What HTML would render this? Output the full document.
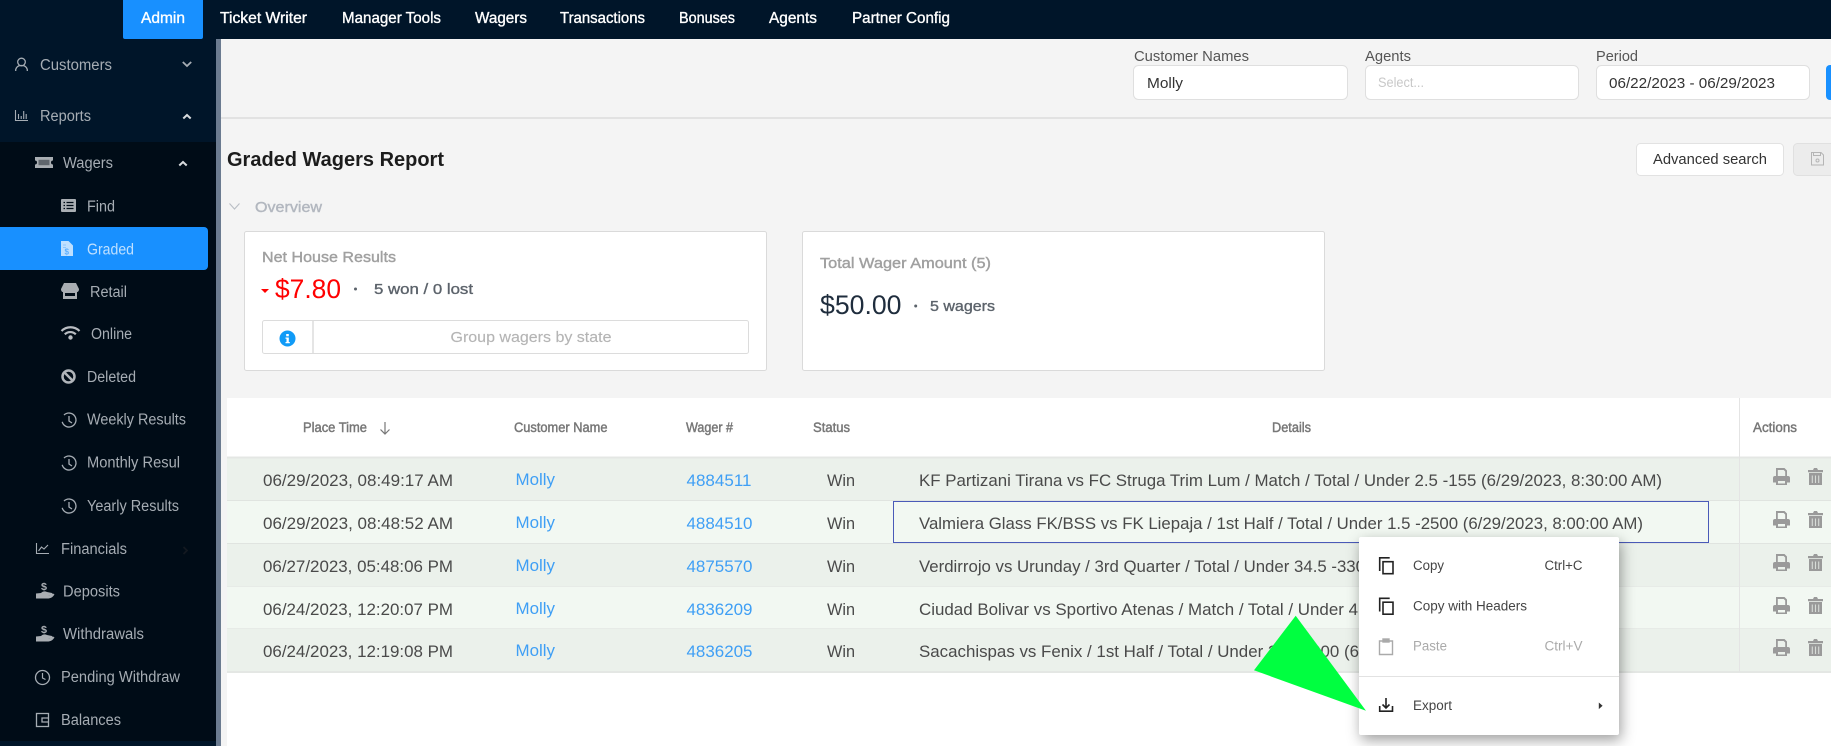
<!DOCTYPE html>
<html lang="en">
<head>
<meta charset="utf-8">
<title>Graded Wagers Report</title>
<style>
html,body{margin:0;padding:0;width:1831px;height:746px;overflow:hidden;background:#f4f4f4}
svg{display:block}
text{font-family:"Liberation Sans",Arial,sans-serif;font-size:14px;white-space:pre}
.nav{fill:#fff;font-size:15.5px;stroke:#fff;stroke-width:.35}
.side{fill:#a6adb4;font-size:15.5px}
.lab{fill:#555;font-size:14.5px}
.inp{fill:#333;font-size:15px}
.cell{fill:#4a4a4a;font-size:16.5px}
.link{fill:#3f9ff5;font-size:16.5px}
.hd{fill:#777;font-size:13.5px;stroke:#777;stroke-width:.45}
.ttl{fill:#a0a0a0;font-size:15px;stroke:#a0a0a0;stroke-width:.4}
.sub{fill:#5c636b;font-size:14.5px;stroke:#5c636b;stroke-width:.35}
.mi{fill:#444;font-size:13.5px}
.dis{fill:#aaa;font-size:13.5px}
.ln{fill:none;stroke:#a6adb4;stroke-width:1.3}
.g{fill:#a9aeb3}
</style>
</head>
<body>
<svg xmlns="http://www.w3.org/2000/svg" width="1831" height="746" viewBox="0 0 1831 746">
<defs>
<g id="print"><path fill="#9a9a9a" fill-rule="evenodd" d="M3 8V0h8.500L14 2.500V8h1a2 2 0 0 1 2 2v4.500h-3V17H3v-2.500H0V10a2 2 0 0 1 2-2zM4.800 2v6h7.400V3.500L10.700 2zM5 13v2.500h7V13z"/></g>
<g id="trash"><path fill="#9a9a9a" d="M0 2h5l1-2h3l1 2h5v2.200H0zM1 5h13v12H1z"/><path d="M4.300 7.500v7.500M7.500 7.500v7.500M10.700 7.500v7.500" stroke="#d8dcd8" stroke-width="1.100"/></g>
<g id="copy" fill="none" stroke="#222" stroke-width="1.600"><path d="M1379.700 571V557.800h10"/><rect x="1383" y="561.700" width="10" height="12"/></g>
<g id="clock" class="ln"><path d="M64 415.100a7 7 0 1 1-1.800 6.700"/><path d="M69 416v5l3 2"/></g>
<g id="hand" class="g"><path d="M41 593c2-2 4-2 6-1l5 1c1 1 0 2-1 2l-3 .5c2 0 4-1 5-2l1.500 1c-2 3-4 4-7 4H36v-5z"/><text x="41" y="590" style="font-size:10px;font-weight:bold;fill:#a9aeb3" textLength="6" lengthAdjust="spacingAndGlyphs">$</text></g>
</defs>

<!-- page -->
<rect width="1831" height="746" fill="#f4f4f4"/>

<!-- top bar -->
<rect width="1831" height="39" fill="#001529"/>
<path d="M123 0h80v37a2 2 0 0 1-2 2h-76a2 2 0 0 1-2-2z" fill="#1890ff"/>
<text class="nav" x="141" y="23" textLength="44" lengthAdjust="spacingAndGlyphs">Admin</text>
<text class="nav" x="220" y="23" textLength="87" lengthAdjust="spacingAndGlyphs">Ticket Writer</text>
<text class="nav" x="342" y="23" textLength="99" lengthAdjust="spacingAndGlyphs">Manager Tools</text>
<text class="nav" x="475" y="23" textLength="52" lengthAdjust="spacingAndGlyphs">Wagers</text>
<text class="nav" x="560" y="23" textLength="85" lengthAdjust="spacingAndGlyphs">Transactions</text>
<text class="nav" x="679" y="23" textLength="56" lengthAdjust="spacingAndGlyphs">Bonuses</text>
<text class="nav" x="769" y="23" textLength="48" lengthAdjust="spacingAndGlyphs">Agents</text>
<text class="nav" x="852" y="23" textLength="98" lengthAdjust="spacingAndGlyphs">Partner Config</text>

<!-- sidebar -->
<rect x="0" y="39" width="216" height="103" fill="#001529"/>
<rect x="0" y="142" width="216" height="599" fill="#000c17"/>
<rect x="0" y="741" width="216" height="5" fill="#001529"/>
<rect x="216" y="39" width="5" height="707" fill="#6b7b90"/>
<path d="M0 227h204a4 4 0 0 1 4 4v35a4 4 0 0 1-4 4H0z" fill="#1890ff"/>

<!-- customers -->
<g class="ln"><circle cx="21.500" cy="62" r="3.800"/><path d="M15.700 71v-1.500a5 5 0 0 1 5-4h1.600a5 5 0 0 1 5 4V71"/></g>
<text class="side" x="40" y="70" textLength="72" lengthAdjust="spacingAndGlyphs">Customers</text>
<path d="M182.800 62l4.200 4 4.200-4" fill="none" stroke="#a6adb4" stroke-width="1.800"/>
<!-- reports -->
<g fill="none" stroke="#a6adb4" stroke-width="1.100"><path d="M15.500 110v10.500H28"/><path d="M18.500 119v-5M21.200 119v-3M23.700 119v-8M26.200 119v-5"/></g>
<text class="side" x="40" y="121" textLength="51" lengthAdjust="spacingAndGlyphs">Reports</text>
<path d="M183.300 118.500l3.700-3.500 3.700 3.500" fill="none" stroke="#d8dbde" stroke-width="2"/>
<!-- wagers -->
<path class="g" d="M35 157h18v3.500a2 2 0 0 0 0 4V168H35v-3.500a2 2 0 0 0 0-4z"/>
<rect x="38.500" y="159.800" width="11" height="5.400" fill="#5f666d"/>
<text class="side" x="63" y="168" textLength="50" lengthAdjust="spacingAndGlyphs">Wagers</text>
<path d="M179.300 165.500l3.700-3.500 3.700 3.500" fill="none" stroke="#d8dbde" stroke-width="2"/>
<!-- find -->
<rect x="61" y="199" width="15" height="13" rx="1" fill="#a9aeb3"/>
<path d="M63.500 202.500h1.500M66.500 202.500h7M63.500 205.500h1.500M66.500 205.500h7M63.500 208.500h1.500M66.500 208.500h7" stroke="#000c17" stroke-width="1.300"/>
<text class="side" x="87" y="211.500" textLength="28" lengthAdjust="spacingAndGlyphs">Find</text>
<!-- graded -->
<path d="M61 241h7.500l4.500 4.500V256H61z" fill="#bfe0ff"/>
<path d="M63 245h3M63 247.500h3" stroke="#8cc6ff" stroke-width=".9"/>
<text x="64.500" y="254.500" style="font-size:8px;fill:#5aaeff;font-weight:bold">$</text>
<text class="side" x="87" y="254.500" textLength="47" lengthAdjust="spacingAndGlyphs" style="fill:#bfe0ff">Graded</text>
<!-- retail -->
<path class="g" fill-rule="evenodd" d="M64 283h12l3 6c0 2-1 3-2 3v7H63v-7c-1 0-2-1-2-3zM65 293v3h10v-3z"/>
<text class="side" x="90" y="297" textLength="37" lengthAdjust="spacingAndGlyphs">Retail</text>
<!-- online -->
<g fill="none" stroke="#b9bdc2" stroke-width="2.200"><path d="M61.500 331c5-5 13-5 18 0"/><path d="M64.800 334.300c3-3 8-3 11 0"/></g>
<circle cx="70.500" cy="337.500" r="2.200" fill="#b9bdc2"/>
<text class="side" x="91" y="339" textLength="41" lengthAdjust="spacingAndGlyphs">Online</text>
<!-- deleted -->
<circle cx="68.500" cy="376.500" r="6" fill="none" stroke="#b0b5ba" stroke-width="2.500"/>
<path d="M64 372l9 9" stroke="#b0b5ba" stroke-width="2.500"/>
<text class="side" x="87" y="382" textLength="49" lengthAdjust="spacingAndGlyphs">Deleted</text>
<!-- results -->
<use href="#clock"/>
<text class="side" x="87" y="424.500" textLength="99" lengthAdjust="spacingAndGlyphs">Weekly Results</text>
<use href="#clock" transform="translate(0 43)"/>
<text class="side" x="87" y="467.500" textLength="93" lengthAdjust="spacingAndGlyphs">Monthly Resul</text>
<use href="#clock" transform="translate(0 86)"/>
<text class="side" x="87" y="511" textLength="92" lengthAdjust="spacingAndGlyphs">Yearly Results</text>
<!-- financials -->
<g fill="none" stroke="#a6adb4" stroke-width="1.100"><path d="M36.500 543v10.500H49"/><path d="M38.500 551l3-4 2.500 2 4-4"/></g>
<text class="side" x="61" y="554" textLength="66" lengthAdjust="spacingAndGlyphs">Financials</text>
<path d="M183.500 547l3.500 3.500-3.500 3.500" fill="none" stroke="#121920" stroke-width="1.800"/>
<!-- deposits -->
<use href="#hand"/>
<text class="side" x="63" y="596.500" textLength="57" lengthAdjust="spacingAndGlyphs">Deposits</text>
<use href="#hand" transform="translate(0 43)"/>
<text class="side" x="63" y="639" textLength="81" lengthAdjust="spacingAndGlyphs">Withdrawals</text>
<!-- pending -->
<circle cx="42.500" cy="677.500" r="7" fill="none" stroke="#a6adb4" stroke-width="1.300"/>
<path d="M42.500 673v5l3 1.500" fill="none" stroke="#a6adb4" stroke-width="1.200"/>
<text class="side" x="61" y="682" textLength="119" lengthAdjust="spacingAndGlyphs">Pending Withdraw</text>
<!-- balances -->
<g fill="none" stroke="#a6adb4" stroke-width="1.300"><rect x="36.500" y="713.500" width="12" height="13"/><path d="M48 718h-6v4h6"/></g>
<text class="side" x="61" y="725" textLength="60" lengthAdjust="spacingAndGlyphs">Balances</text>

<!-- filter header -->
<rect x="221" y="117" width="1610" height="2" fill="#e2e2e2"/>
<text class="lab" x="1134" y="61" textLength="115" lengthAdjust="spacingAndGlyphs">Customer Names</text>
<text class="lab" x="1365" y="61" textLength="46" lengthAdjust="spacingAndGlyphs">Agents</text>
<text class="lab" x="1596" y="61" textLength="42" lengthAdjust="spacingAndGlyphs">Period</text>
<rect x="1133.500" y="65.500" width="214" height="34" rx="5" fill="#fff" stroke="#dfdfdf"/>
<rect x="1365.500" y="65.500" width="213" height="34" rx="5" fill="#fff" stroke="#dfdfdf"/>
<rect x="1596.500" y="65.500" width="213" height="34" rx="5" fill="#fff" stroke="#dfdfdf"/>
<rect x="1826" y="65" width="12" height="35" rx="4" fill="#1890ff"/>
<text class="inp" x="1147" y="88" textLength="36" lengthAdjust="spacingAndGlyphs">Molly</text>
<text x="1378" y="87" textLength="46" lengthAdjust="spacingAndGlyphs" style="fill:#c8c8c8;font-size:13.5px">Select...</text>
<text class="inp" x="1609" y="88" textLength="166" lengthAdjust="spacingAndGlyphs">06/22/2023 - 06/29/2023</text>

<!-- title row -->
<text x="227" y="166" textLength="217" lengthAdjust="spacingAndGlyphs" style="font-size:20.5px;font-weight:bold;fill:#1c1c1c">Graded Wagers Report</text>
<rect x="1636.500" y="143.500" width="147" height="32" rx="4" fill="#fff" stroke="#e2e2e2"/>
<text x="1653" y="164" textLength="114" lengthAdjust="spacingAndGlyphs" style="font-size:14.5px;fill:#333">Advanced search</text>
<rect x="1793.500" y="143.500" width="50" height="32" rx="4" fill="#ececec" stroke="#e0e0e0"/>
<g fill="none" stroke="#b5b5b5" stroke-width="1"><path d="M1811.500 152.500h9.500l2.500 2.500v10h-12z"/><circle cx="1817.500" cy="160.500" r="1.500"/><path d="M1813.500 152.500v3h7v-3"/></g>

<!-- overview -->
<path d="M229.500 203.500l5 5.500 5-5.500" fill="none" stroke="#b9bec5" stroke-width="1.100"/>
<text x="255" y="212" textLength="67" lengthAdjust="spacingAndGlyphs" style="font-size:15px;fill:#b2b7bf;stroke:#b2b7bf;stroke-width:.4">Overview</text>

<!-- card 1 -->
<rect x="244.500" y="231.500" width="522" height="139" rx="2" fill="#fff" stroke="#dadada"/>
<text class="ttl" x="262" y="262" textLength="134" lengthAdjust="spacingAndGlyphs">Net House Results</text>
<path d="M261 289h8l-4 4z" fill="#f00"/>
<text x="275" y="298" textLength="66" lengthAdjust="spacingAndGlyphs" style="font-size:26.5px;fill:#f00">$7.80</text>
<circle cx="355.500" cy="289" r="1.500" fill="#5c636b"/>
<text class="sub" x="374" y="294" textLength="99" lengthAdjust="spacingAndGlyphs">5 won / 0 lost</text>
<rect x="262.500" y="320.500" width="486" height="33" rx="2" fill="#fff" stroke="#dcdcdc"/>
<path d="M313 320v34" stroke="#dcdcdc" stroke-width="1.500"/>
<circle cx="287.500" cy="338.500" r="8" fill="#119bf7"/>
<rect x="286.200" y="334" width="2.600" height="2.300" fill="#fff"/>
<path d="M285.500 337.500h3.300v4.500h1v1.200h-4.300V342h1v-3.300h-1z" fill="#fff"/>
<text x="450.500" y="342" textLength="161" lengthAdjust="spacingAndGlyphs" style="font-size:15px;fill:#b5b5b5;stroke:#b5b5b5;stroke-width:.15">Group wagers by state</text>

<!-- card 2 -->
<rect x="802.500" y="231.500" width="522" height="139" rx="2" fill="#fff" stroke="#dadada"/>
<text class="ttl" x="820" y="268" textLength="171" lengthAdjust="spacingAndGlyphs">Total Wager Amount (5)</text>
<text x="820" y="314" textLength="81.500" lengthAdjust="spacingAndGlyphs" style="font-size:26.500px;fill:#1f2d3d">$50.00</text>
<circle cx="915.700" cy="306" r="1.500" fill="#5c636b"/>
<text class="sub" x="930" y="311" textLength="65" lengthAdjust="spacingAndGlyphs">5 wagers</text>

<!-- table -->
<rect x="227" y="398" width="1604" height="348" fill="#fff"/>
<rect x="227" y="457" width="1604" height="44" fill="#ebf1eb"/>
<rect x="227" y="501" width="1604" height="43" fill="#f2f8f2"/>
<rect x="227" y="544" width="1604" height="43" fill="#ebf1eb"/>
<rect x="227" y="587" width="1604" height="42" fill="#f2f8f2"/>
<rect x="227" y="629" width="1604" height="42" fill="#ebf1eb"/>
<rect x="227" y="456.500" width="1604" height="2" fill="#e4e7e4"/>
<rect x="227" y="500" width="1604" height="1" fill="#e0e4e0"/>
<rect x="227" y="543" width="1604" height="1" fill="#e0e4e0"/>
<rect x="227" y="586" width="1604" height="1" fill="#e7ebe7"/>
<rect x="227" y="628" width="1604" height="1" fill="#e7ebe7"/>
<rect x="227" y="671" width="1604" height="2" fill="#e4e7e4"/>
<rect x="1739" y="398" width="1" height="274" fill="#e4e4e4"/>

<text class="hd" x="303" y="432" textLength="64" lengthAdjust="spacingAndGlyphs">Place Time</text>
<path d="M385 422v12M380.500 429.500l4.500 4.500 4.500-4.500" fill="none" stroke="#777" stroke-width="1.200"/>
<text class="hd" x="514" y="432" textLength="93.500" lengthAdjust="spacingAndGlyphs">Customer Name</text>
<text class="hd" x="686" y="432" textLength="47" lengthAdjust="spacingAndGlyphs">Wager #</text>
<text class="hd" x="813" y="432" textLength="37" lengthAdjust="spacingAndGlyphs">Status</text>
<text class="hd" x="1272" y="432" textLength="39" lengthAdjust="spacingAndGlyphs">Details</text>
<text class="hd" x="1753" y="432" textLength="44" lengthAdjust="spacingAndGlyphs">Actions</text>

<!-- row 1 -->
<text class="cell" x="263" y="486" textLength="190" lengthAdjust="spacingAndGlyphs">06/29/2023, 08:49:17 AM</text>
<text class="link" x="515.500" y="485" textLength="39.500" lengthAdjust="spacingAndGlyphs">Molly</text>
<text class="link" x="686.500" y="486" textLength="65" lengthAdjust="spacingAndGlyphs">4884511</text>
<text class="cell" x="827" y="486" textLength="28" lengthAdjust="spacingAndGlyphs">Win</text>
<text class="cell" x="919" y="486" textLength="743" lengthAdjust="spacingAndGlyphs">KF Partizani Tirana vs FC Struga Trim Lum / Match / Total / Under 2.5 -155 (6/29/2023, 8:30:00 AM)</text>
<!-- row 2 -->
<text class="cell" x="263" y="529" textLength="190" lengthAdjust="spacingAndGlyphs">06/29/2023, 08:48:52 AM</text>
<text class="link" x="515.500" y="528" textLength="39.500" lengthAdjust="spacingAndGlyphs">Molly</text>
<text class="link" x="686.500" y="529" textLength="66" lengthAdjust="spacingAndGlyphs">4884510</text>
<text class="cell" x="827" y="529" textLength="28" lengthAdjust="spacingAndGlyphs">Win</text>
<text class="cell" x="919" y="529" textLength="724" lengthAdjust="spacingAndGlyphs">Valmiera Glass FK/BSS vs FK Liepaja / 1st Half / Total / Under 1.5 -2500 (6/29/2023, 8:00:00 AM)</text>
<!-- row 3 -->
<text class="cell" x="263" y="572" textLength="190" lengthAdjust="spacingAndGlyphs">06/27/2023, 05:48:06 PM</text>
<text class="link" x="515.500" y="571" textLength="39.500" lengthAdjust="spacingAndGlyphs">Molly</text>
<text class="link" x="686.500" y="572" textLength="66" lengthAdjust="spacingAndGlyphs">4875570</text>
<text class="cell" x="827" y="572" textLength="28" lengthAdjust="spacingAndGlyphs">Win</text>
<text class="cell" x="919" y="572" textLength="446" lengthAdjust="spacingAndGlyphs">Verdirrojo vs Urunday / 3rd Quarter / Total / Under 34.5 -330</text>
<!-- row 4 -->
<text class="cell" x="263" y="615" textLength="190" lengthAdjust="spacingAndGlyphs">06/24/2023, 12:20:07 PM</text>
<text class="link" x="515.500" y="614" textLength="39.500" lengthAdjust="spacingAndGlyphs">Molly</text>
<text class="link" x="686.500" y="615" textLength="66" lengthAdjust="spacingAndGlyphs">4836209</text>
<text class="cell" x="827" y="615" textLength="28" lengthAdjust="spacingAndGlyphs">Win</text>
<text class="cell" x="919" y="615" textLength="439" lengthAdjust="spacingAndGlyphs">Ciudad Bolivar vs Sportivo Atenas / Match / Total / Under 4</text>
<!-- row 5 -->
<text class="cell" x="263" y="657" textLength="190" lengthAdjust="spacingAndGlyphs">06/24/2023, 12:19:08 PM</text>
<text class="link" x="515.500" y="656" textLength="39.500" lengthAdjust="spacingAndGlyphs">Molly</text>
<text class="link" x="686.500" y="657" textLength="66" lengthAdjust="spacingAndGlyphs">4836205</text>
<text class="cell" x="827" y="657" textLength="28" lengthAdjust="spacingAndGlyphs">Win</text>
<text class="cell" x="919" y="657" textLength="440" lengthAdjust="spacingAndGlyphs">Sacachispas vs Fenix / 1st Half / Total / Under 2.5 -2000 (6</text>

<!-- action icons -->
<use href="#print" transform="translate(1773 468)"/><use href="#trash" transform="translate(1808 468)"/>
<use href="#print" transform="translate(1773 511)"/><use href="#trash" transform="translate(1808 511)"/>
<use href="#print" transform="translate(1773 554)"/><use href="#trash" transform="translate(1808 554)"/>
<use href="#print" transform="translate(1773 597)"/><use href="#trash" transform="translate(1808 597)"/>
<use href="#print" transform="translate(1773 639)"/><use href="#trash" transform="translate(1808 639)"/>

<!-- selected cell -->
<rect x="893.500" y="501.500" width="815" height="41" fill="none" stroke="#4a5ab8" stroke-width="1"/>

<!-- context menu -->
<rect x="1359" y="537" width="260" height="198" rx="2" fill="#fff" style="filter:drop-shadow(2px 5px 7px rgba(0,0,0,.38))"/>
<use href="#copy"/>
<text class="mi" x="1413" y="570" textLength="31" lengthAdjust="spacingAndGlyphs">Copy</text>
<text class="mi" x="1544.500" y="570" textLength="38" lengthAdjust="spacingAndGlyphs">Ctrl+C</text>
<use href="#copy" transform="translate(0 40.500)"/>
<text class="mi" x="1413" y="610.500" textLength="114" lengthAdjust="spacingAndGlyphs">Copy with Headers</text>
<g fill="none" stroke="#aaa" stroke-width="1.400"><path d="M1383 641h-3.500v13.500h13V641h-3.500"/><rect x="1383" y="639" width="6" height="3" fill="#aaa"/></g>
<text class="dis" x="1413" y="650.500" textLength="34" lengthAdjust="spacingAndGlyphs">Paste</text>
<text class="dis" x="1544.500" y="650.500" textLength="38" lengthAdjust="spacingAndGlyphs">Ctrl+V</text>
<rect x="1359" y="676" width="260" height="1" fill="#e2e2e2"/>
<g fill="none" stroke="#222" stroke-width="1.600"><path d="M1379.700 706v5.200h12.800V706"/><path d="M1386 698v10M1382.500 704.500l3.500 3.500 3.500-3.500"/></g>
<text class="mi" x="1413" y="710" textLength="39" lengthAdjust="spacingAndGlyphs">Export</text>
<path d="M1598.800 702.500l3.800 3.300-3.800 3.300z" fill="#333"/>

<!-- green arrow -->
<path d="M1295.700 615.700L1254 670.300 1366 710.700z" fill="#00ff40"/>
</svg>
</body>
</html>
